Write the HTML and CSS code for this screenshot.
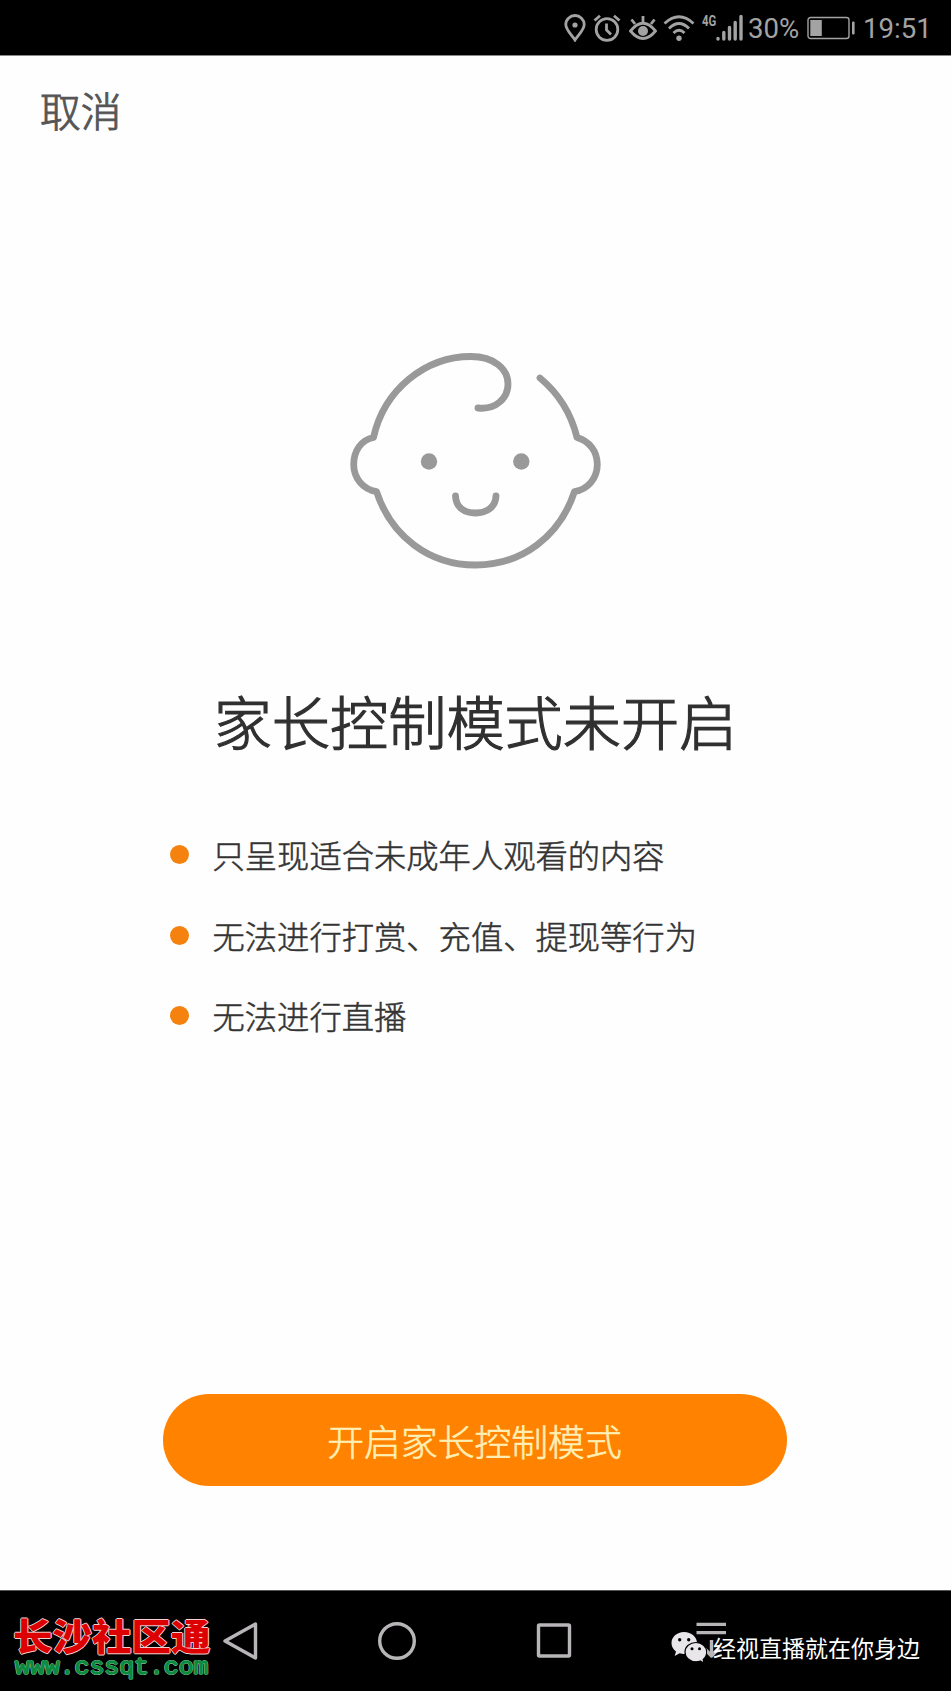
FILE: index.html
```html
<!DOCTYPE html>
<html lang="zh-CN">
<head>
	<meta charset="UTF-8">
	<title>家长控制模式</title>
	<link rel="stylesheet" href="styles.css">
</head>
<body>

<div class="statusbar">
	<svg class="ico_pos" width="22" height="28" viewBox="0 0 22 28">
		<path d="M11 26 C8 21 1.8 16 1.8 10.5 A9.2 9 0 0 1 20.2 10.5 C20.2 16 14 21 11 26 Z"/>
		<circle class="pieno" cx="11" cy="11" r="2.6"/>
	</svg>
	<svg class="ico_alarm" width="28" height="28" viewBox="0 0 28 28">
		<circle cx="14" cy="15.5" r="10.8"/>
		<path d="M1.5 6.5 L7 1.8 M26.5 6.5 L21 1.8 M13.5 9.5 V16 L18 20.5"/>
	</svg>
	<svg class="ico_eye" width="28" height="28" viewBox="0 0 28 28">
		<path d="M1.5 17 Q14 1.5 26.5 17 Q14 32 1.5 17 Z M14 8 V2 M6 10 L2.5 5.5 M22 10 L25.5 5.5"/>
		<circle class="pieno" cx="14" cy="17" r="5"/>
	</svg>
	<svg class="ico_wifi" width="32" height="28" viewBox="0 0 32 28">
		<path d="M1.5 9.5 Q16 -4 30.5 9.5 M6 14.5 Q16 4.5 26 14.5 M10.5 19 Q16 13.5 21.5 19"/>
		<circle class="pieno" cx="16" cy="24.2" r="2.7"/>
	</svg>
	<span class="rete">4G</span>
	<svg class="ico_signal" width="28" height="28" viewBox="0 0 28 28">
		<path d="M2 24.5 V25 M7.8 18.5 V25 M13.5 13.5 V25 M19.2 8.5 V25 M25 2.5 V25"/>
	</svg>
	<span class="percent">30%</span>
	<svg class="ico_battery" width="48" height="24" viewBox="0 0 48 24">
		<rect class="fino" x="1" y="1.5" width="41" height="21" rx="2.5"/>
		<rect class="pieno" x="3.3" y="4" width="11.5" height="16"/>
		<rect class="pieno" x="45" y="5.5" width="2.6" height="13" rx="1"/>
	</svg>
	<span class="ora">19:51</span>
</div>

<div class="pagina">
	<a class="annulla">取消</a>

	<svg class="bimbo" width="290" height="260" viewBox="0 0 290 260">
		<path d="M148 78 C166 80 178 68 178 54 C178 39 164 26.5 141 26.5 C95 26.5 54 60 43.5 107.5 C31 110 23.7 121 23.7 134.5 C23.7 148 33 159.5 46.5 161.5 C61 206 99 235 145.5 235 C192 235 230 206 244.5 161.5 C258 159.5 267.3 148 267.3 134.5 C267.3 121 259 111 247 107.5 C241 83 228 63 210 48"/>
		<path d="M125.5 166 C126 177 134 183 145.5 183 C157 183 165.5 177 166 166"/>
		<circle class="occhio" cx="99" cy="131.5" r="8.2"/>
		<circle class="occhio" cx="191.3" cy="131.5" r="8.2"/>
	</svg>

	<h1>家长控制模式未开启</h1>

	<ul class="elenco">
		<li><span>只呈现适合未成年人观看的内容</span></li>
		<li><span>无法进行打赏、充值、提现等行为</span></li>
		<li><span>无法进行直播</span></li>
	</ul>

	<button class="attiva">开启家长控制模式</button>
</div>

<div class="navbar">
	<svg width="40" height="40" viewBox="0 0 40 40"><path d="M35.5 3 V37 L5 20 Z"/></svg>
	<svg width="40" height="40" viewBox="0 0 40 40"><circle cx="20" cy="20" r="17.3"/></svg>
	<svg width="40" height="40" viewBox="0 0 40 40"><rect x="4.5" y="4" width="31" height="31" rx="1"/></svg>
	<svg width="40" height="40" viewBox="0 0 40 40"><path d="M5.5 3.4 H35 M5.5 11.6 H35 M20.5 19 V34 M13 27 L20.5 35 L28 27"/></svg>

	<div class="marchio">
		<div class="marchio_nome">长沙社区通</div>
		<div class="marchio_url">www.cssqt.com</div>
	</div>

	<div class="wechat">
		<svg width="36" height="34" viewBox="0 0 36 34">
			<path class="bolla" d="M13 1 C5.8 1 0.5 6 0.5 12 C0.5 15.5 2.2 18.5 5 20.5 L3.7 25 L8.6 22.2 C10 22.7 12 23 13.5 23 C20.5 23 26 18 26 12 C26 6 20.5 1 13 1 Z"/>
			<path class="bolla bordo" d="M25 11.5 C18.8 11.5 14 15.8 14 21 C14 26.5 19 30.8 25 30.8 C26.5 30.8 28 30.5 29.3 30 L33 32.2 L32.2 28.5 C34.3 26.8 35.7 24 35.7 21 C35.7 15.8 31 11.5 25 11.5 Z"/>
			<circle cx="8.7" cy="8.8" r="1.7"/><circle cx="17.7" cy="8.8" r="1.7"/>
			<circle cx="21" cy="17.8" r="1.5"/><circle cx="28.5" cy="17.8" r="1.5"/>
		</svg>
		<span>经视直播就在你身边</span>
	</div>
</div>

</body>
</html>
```
FILE: styles.css
```css
:root {
	--arancio: #ff8200;
	--grigio: #999999;
	--stato: #a3a3a3;
}

* {box-sizing:border-box;}

body {
	margin:0;width:951px;height:1691px;
	display:flex;flex-direction:column;
	background-color:#fefefe;
	font-family:"Noto Sans CJK SC",sans-serif;
	font-weight:300;
}

svg {display:block;flex:none;}

/* barra di stato */
.statusbar {
	height:55px;flex:none;
	display:flex;align-items:flex-start;
	padding:14px 0 0 564px;
	background-color:#000;color:var(--stato);
	font-family:Roboto,sans-serif;font-weight:400;
}
.statusbar svg {fill:none;stroke:var(--stato);stroke-width:2.8;}
.statusbar .pieno {fill:var(--stato);stroke:none;}
.statusbar .fino {stroke-width:1.4;}
.ico_alarm {margin-left:7px;}
.ico_eye {margin-left:8px;}
.ico_wifi {margin-left:6px;}
.rete {margin-left:7px;width:15px;font-size:15px;line-height:14px;font-weight:700;white-space:nowrap;transform:scaleX(0.76);transform-origin:left;}
.statusbar .ico_signal {margin-left:-1px;stroke-width:3.4;stroke-linecap:round;}
.percent {margin-left:4px;width:54px;font-size:27.6px;line-height:30px;}
.ico_battery {margin:2px 0 0 5px;}
.ora {margin-left:8px;font-size:27.6px;line-height:30px;white-space:nowrap;}

/* contenuto */
.pagina {flex:1;display:flex;flex-direction:column;border-top:1px solid #888;}
.annulla {margin:24px 0 0 40px;font-size:40.8px;line-height:60px;color:#555;-webkit-text-stroke:0.9px #555;}
.bimbo {margin:190px 0 0 330px;fill:none;stroke:var(--grigio);stroke-width:6.8;stroke-linecap:round;stroke-linejoin:round;}
.bimbo .occhio {fill:var(--grigio);stroke:none;}

h1 {margin:90px 0 0;font-size:58.2px;line-height:80px;font-weight:300;text-align:center;color:#303030;-webkit-text-stroke:1.2px #303030;}

.elenco {margin:56px 0 0 170px;padding:0;list-style:none;font-size:32.3px;color:#333;}
.elenco li {height:80.6px;display:flex;align-items:center;}
.elenco li::before {content:"";width:19px;height:19px;margin:-3px 23.5px 0 0;border-radius:50%;background-color:#f5820f;}
.elenco span {padding-bottom:4px;-webkit-text-stroke:0.5px #333;}

.attiva {
	width:624px;height:92px;margin:336px 0 0 163px;padding:0 1px 0 0;
	border:none;border-radius:46px;
	background-color:var(--arancio);color:#ffefb4;
	font-family:inherit;font-size:36.8px;font-weight:300;text-align:center;
	-webkit-text-stroke:0.6px #ffefb4;
}

/* barra di navigazione */
.navbar {
	position:relative;height:101px;flex:none;
	display:grid;grid-template-columns:repeat(4,157px);
	align-items:center;justify-items:center;
	padding-left:161px;
	background-color:#000;
	border-top:1px solid #555;
}
.navbar > svg {fill:none;stroke:#b8b5b8;stroke-width:3.4;stroke-linejoin:round;}

.marchio {position:absolute;left:13px;top:26px;}
.marchio_nome {
	font-size:39.5px;line-height:36px;font-weight:900;color:#dd0000;
	text-shadow:1px 0 #f0d0d0,-1px 0 #f0d0d0,0 1px #f0d0d0,0 -1px #f0d0d0;white-space:nowrap;
	transform:scaleY(0.94);
}
.marchio_url {
	margin:3px 0 0 2px;
	font-family:"Liberation Mono",monospace;font-size:24.8px;line-height:22px;font-weight:400;color:#0b8a3e;
	-webkit-text-stroke:1.3px #0b8a3e;
	text-shadow:1px 0 #b5dcc2,-1px 0 #b5dcc2,0 1px #b5dcc2,0 -1px #b5dcc2;
}

.wechat {position:absolute;left:671px;top:40px;display:flex;align-items:center;}
.wechat .bolla {fill:#e8e6e8;}
.wechat .bordo {stroke:#000;stroke-width:1.2;}
.wechat span {margin:-3px 0 0 6px;font-size:23px;line-height:34px;font-weight:400;color:#fff;white-space:nowrap;}
```
